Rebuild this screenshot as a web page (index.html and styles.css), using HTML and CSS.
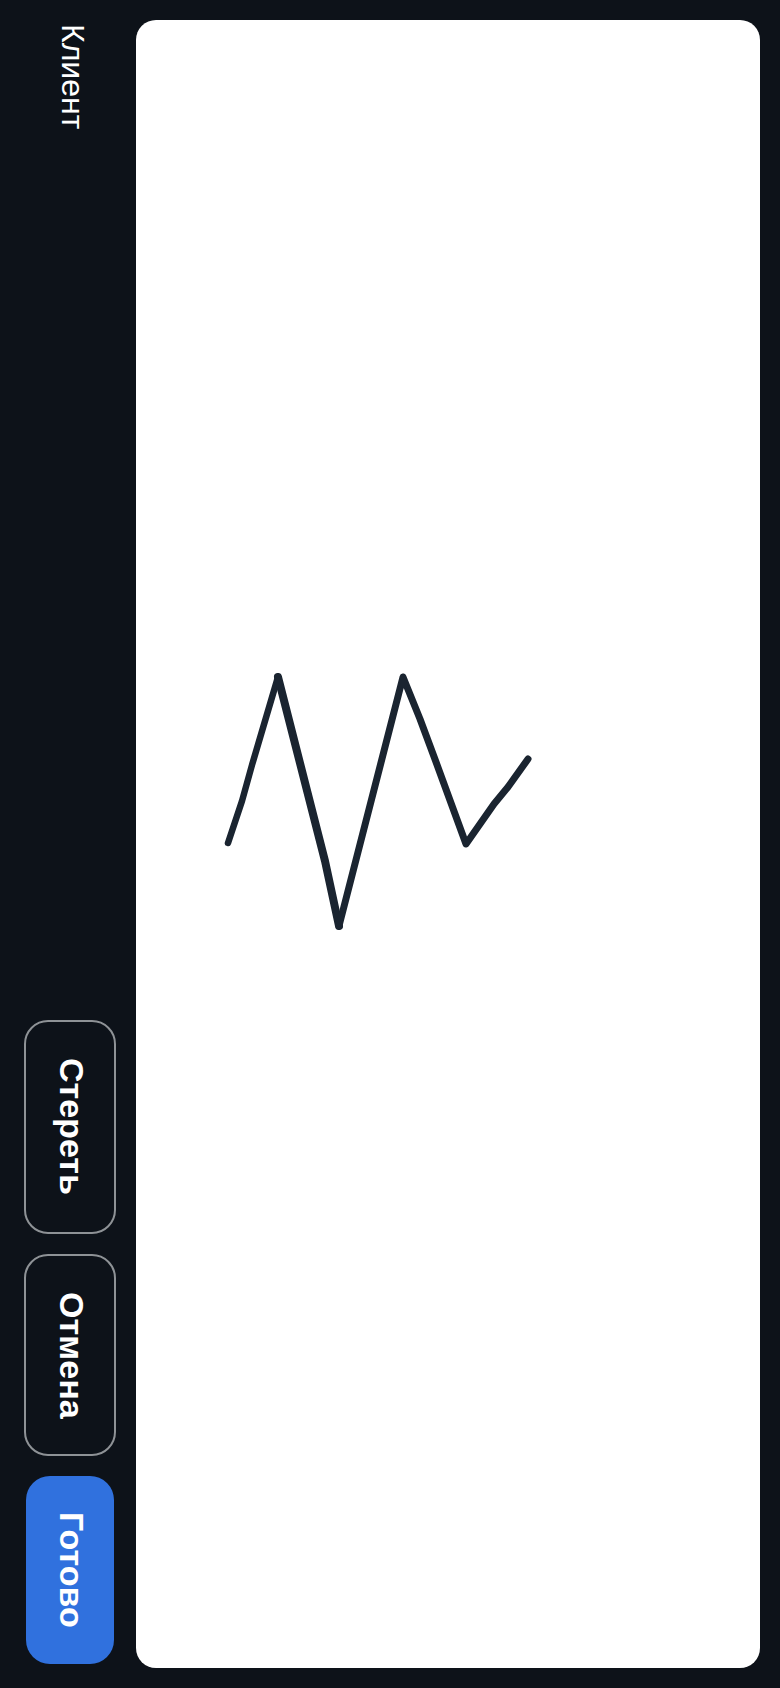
FILE: index.html
```html
<!DOCTYPE html>
<html lang="ru">
<head>
    <meta charset="UTF-8">
    <meta name="viewport" content="width=device-width, initial-scale=1.0">
    <title>Подпись</title>
    <link rel="stylesheet" href="styles.css">
</head>
<body>
    <div class="sidebar">
        <div class="client-name">Клиент</div>
        <div class="actions">
            <button class="btn btn-outline btn-clear">Стереть</button>
            <button class="btn btn-outline">Отмена</button>
            <button class="btn btn-primary">Готово</button>
        </div>
    </div>
    <div class="signature-pad">
        <svg class="signature" viewBox="0 0 624 1648">
            <polyline class="stroke-thin" points="92,823 106,781 116,745 142,657"></polyline>
            <polyline class="stroke-wide" points="142,657 189,841 203,906"></polyline>
            <polyline class="stroke-mid" points="203,906 267,657 284,699 300,742 330,824 358,784 372,767 392,739"></polyline>
        </svg>
    </div>
</body>
</html>
```

FILE: styles.css
```css
* {
    box-sizing: border-box;
}
body {
    margin: 0;
    height: 100vh;
    display: flex;
    background-color: #0d1219;
    font-family: "Liberation Sans", Arial, sans-serif;
}
.sidebar {
    width: 136px;
    padding: 24px 20px 24px 24px;
    display: flex;
    flex-direction: column;
    align-items: center;
    justify-content: space-between;
}
.client-name {
    writing-mode: vertical-rl;
    margin-left: 6px;
    font-size: 32px;
    line-height: 38px;
    color: #ffffff;
}
.actions {
    display: flex;
    flex-direction: column;
    align-items: center;
    gap: 20px;
}
.btn {
    writing-mode: vertical-rl;
    font-family: inherit;
    font-size: 34px;
    font-weight: bold;
    line-height: 40px;
    color: #ffffff;
    cursor: pointer;
}
.btn-outline {
    width: 92px;
    padding: 36px 0 36px 4px;
    background: transparent;
    border: 2px solid #8e9296;
    border-radius: 24px;
}
.btn-clear {
    padding-bottom: 37px;
}
.btn-primary {
    width: 88px;
    padding: 36px 0 36px 4px;
    background-color: #3071de;
    border: none;
    border-radius: 24px;
}
.signature-pad {
    flex: 1;
    margin: 20px 20px 20px 0;
    background: #ffffff;
    border-radius: 20px;
    overflow: hidden;
}
.signature {
    display: block;
    width: 100%;
    height: 100%;
}
.signature polyline {
    fill: none;
    stroke: #1a2430;
    stroke-linecap: round;
    stroke-linejoin: round;
}
.stroke-thin {
    stroke-width: 6.5;
}
.stroke-wide {
    stroke-width: 8;
}
.stroke-mid {
    stroke-width: 7;
}
```
